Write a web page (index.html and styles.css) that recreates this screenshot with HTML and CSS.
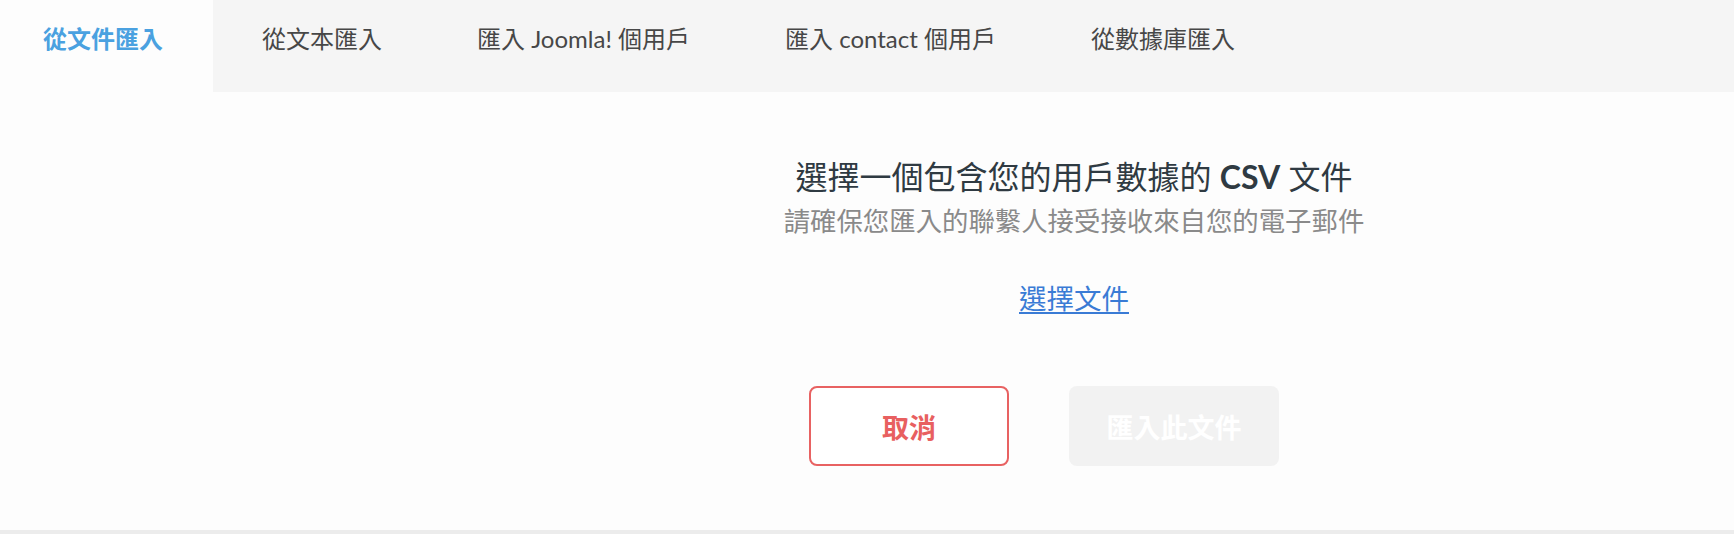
FILE: index.html
```html
<!DOCTYPE html>
<html lang="zh-Hant">
<head>
<meta charset="utf-8">
<title>匯入</title>
<link rel="stylesheet" href="styles.css">
</head>
<body>
<div class="page">
  <nav class="tabs">
    <a class="tab active">從文件匯入</a>
    <a class="tab">從文本匯入</a>
    <a class="tab">匯入 Joomla! 個用戶</a>
    <a class="tab">匯入 contact 個用戶</a>
    <a class="tab">從數據庫匯入</a>
  </nav>
  <main class="content">
    <div class="side"></div>
    <section class="panel">
      <h1 class="title">選擇一個包含您的用戶數據的 <b>CSV</b> 文件</h1>
      <p class="subtitle">請確保您匯入的聯繫人接受接收來自您的電子郵件</p>
      <a class="pick" href="#">選擇文件</a>
      <div class="actions">
        <button class="btn cancel">取消</button>
        <button class="btn import" disabled>匯入此文件</button>
      </div>
    </section>
  </main>
</div>
</body>
</html>
```

FILE: styles.css
```css
html, body {
  margin: 0;
  padding: 0;
  background: #fdfdfd;
}
body {
  font-family: "Lato", "Noto Sans CJK TC", sans-serif;
  width: 1734px;
  height: 534px;
  overflow: hidden;
}
.page {
  display: flex;
  flex-direction: column;
  height: 534px;
}
.tabs {
  display: flex;
  height: 92px;
  background: #f5f5f5;
  flex: none;
}
.tab {
  display: block;
  padding: 23px 47.5px 0;
  font-size: 24px;
  line-height: 32px;
  color: #474747;
  text-decoration: none;
  white-space: nowrap;
}
.tab.active {
  background: #fdfdfd;
  color: #4aa1e0;
  font-weight: 700;
  padding: 23px 50px 0 43px;
}
.tab.active + .tab {
  padding-left: 49px;
}
.content {
  flex: 1;
  display: flex;
  border-bottom: 4px solid #ececec;
  background: #fdfdfd;
}
.side {
  width: 414px;
  flex: none;
}
.panel {
  flex: 1;
  display: flex;
  flex-direction: column;
  align-items: center;
  padding-top: 65px;
}
.title {
  margin: 0;
  font-size: 32px;
  line-height: 40px;
  font-weight: 400;
  color: #2f3a42;
}
.title b {
  font-weight: 700;
}
.subtitle {
  margin: 7px 0 0;
  font-size: 26.4px;
  line-height: 34px;
  color: #8a8a8a;
}
.pick {
  margin-top: 44px;
  font-size: 27.5px;
  line-height: 34px;
  color: #3a7bd5;
  text-decoration: underline;
  text-underline-offset: 3px;
}
.actions {
  display: flex;
  gap: 60px;
  margin-top: 70px;
  padding-right: 60px;
}
.btn {
  height: 80px;
  border-radius: 8px;
  font-family: "Lato", "Noto Sans CJK TC", sans-serif;
  font-size: 27px;
  font-weight: 700;
  cursor: pointer;
}
.cancel {
  width: 200px;
  background: #ffffff;
  border: 2px solid #e86262;
  color: #e86060;
}
.import {
  width: 210px;
  background: #f2f2f2;
  border: none;
  color: #ffffff;
}
```
